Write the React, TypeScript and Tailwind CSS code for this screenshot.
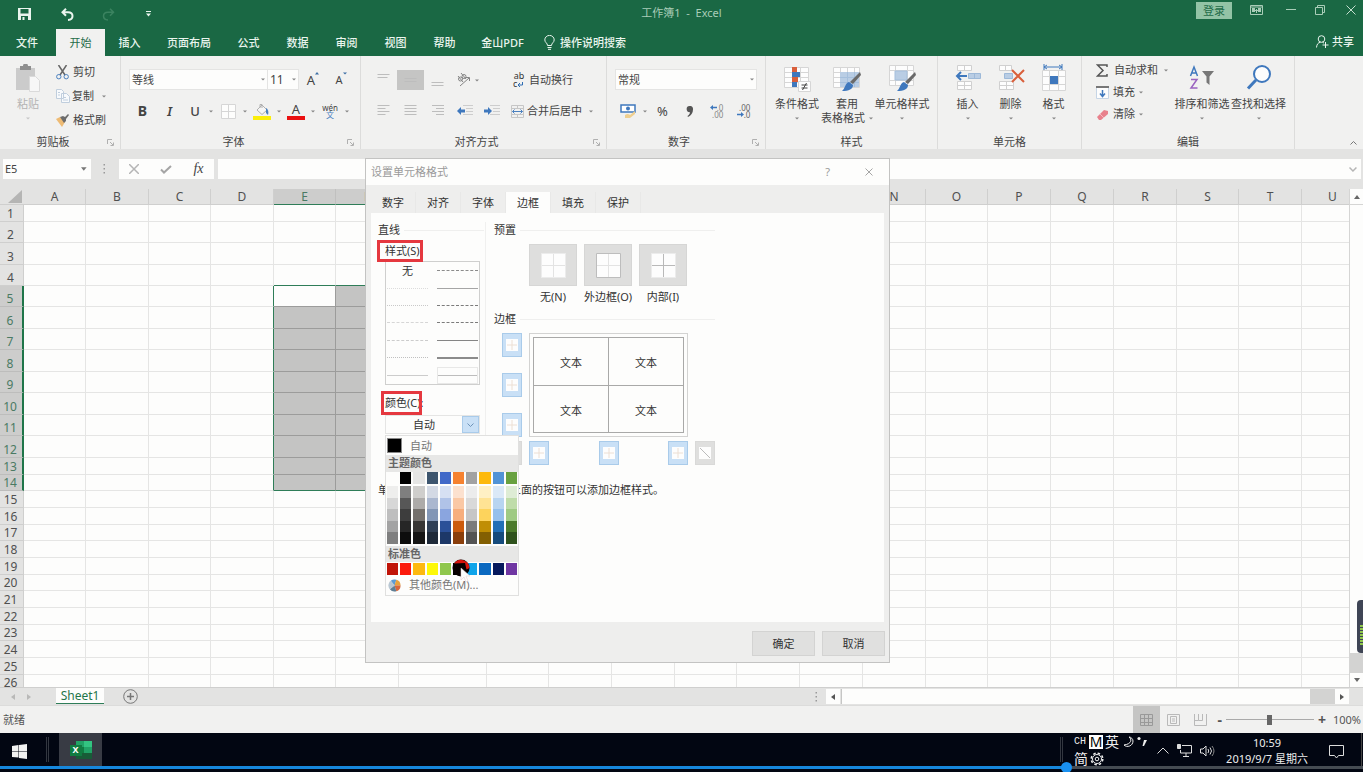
import type { ReactNode } from "react";
import clsx from "clsx";

const FONT = "font-['Noto_Sans','Noto_Sans_CJK_SC',sans-serif]";

/* ---------- small shared pieces ---------- */

function Caret({ className = "text-[#858585]" }: { className?: string }) {
  return (
    <svg width="4" height="3" viewBox="0 0 4 3" className={clsx("shrink-0", className)}>
      <path d="M0 0.5h4L2 2.5z" fill="currentColor" />
    </svg>
  );
}

function Launcher() {
  return (
    <svg width="7" height="7" viewBox="0 0 7 7" fill="none" stroke="#b0b0b0">
      <path d="M.5 5V.5H5M3 3l3 3M6.500 3.500v3h-3" />
    </svg>
  );
}

function Slot({ w, label, active, children }: { w: string; label: string; active?: boolean; children: ReactNode }) {
  return (
    <button aria-label={label} className={clsx("flex h-5 shrink-0 items-center justify-center", w, active && "bg-[#c5c5c4]")}>
      {children}
    </button>
  );
}

function Group({ title, w, inset, launcher, children }: { title: string; w: string; inset?: string; launcher?: boolean; children: ReactNode }) {
  return (
    <section className={clsx("flex shrink-0 flex-col border-r border-[#dcdcdb]", w)}>
      <div className={clsx("flex-1", inset)}>{children}</div>
      <div className={clsx("relative flex h-3.5 items-center justify-center", launcher && "pr-3.5")}>
        {title}
        {launcher && (
          <button aria-label={`${title}设置`} className="absolute top-1 right-1.5">
            <Launcher />
          </button>
        )}
      </div>
    </section>
  );
}

function BigButton({ icon, lines, w, muted }: { icon: ReactNode; lines: string[]; w: string; muted?: boolean }) {
  return (
    <button className={clsx("flex shrink-0 flex-col items-center pt-2 whitespace-nowrap", w, muted && "text-[#b3b3b3]")}>
      {icon}
      <span className="mt-[5px] leading-3.5">{lines[0]}</span>
      {lines[1] ? (
        <span className="flex items-center gap-1 leading-3.5">
          {lines[1]} <Caret />
        </span>
      ) : (
        <span className="mt-1.5">
          <Caret className={muted ? "text-[#c6c6c6]" : "text-[#858585]"} />
        </span>
      )}
    </button>
  );
}

function Lines({ widths, top = 0 }: { widths: number[]; top?: number }) {
  return (
    <svg width="14" height="14" viewBox="0 0 14 14" stroke="#bdbdbd">
      {widths.map((w, i) => {
        const x = w < 0 ? 13 + w : 0.5;
        return <path key={i} d={`M${x} ${top + i * 3 + 1.5}h${Math.abs(w)}`} />;
      })}
    </svg>
  );
}

function Indent({ right }: { right?: boolean }) {
  return (
    <svg width="16" height="14" viewBox="0 0 16 14" fill="none">
      <path d="M6 1.500h10M9 4.500h7M9 7.500h7M6 10.500h10" stroke="#cdcdcd" />
      <path d="M0 7l4-4v2.500h4v3H4V11z" fill="#3f78bd" transform={right ? "matrix(-1 0 0 1 8 0)" : undefined} />
    </svg>
  );
}

function Brush() {
  return (
    <>
      <path d="M28 8l1 3-8 9-3-2z" fill="#6a6a6a" />
      <path d="M17 18l4 3c0 4-4 6-11 6 3-2 3-8 7-9z" fill="#3f78bd" />
    </>
  );
}

/* ---------- title bar & tabs ---------- */

function TitleBar() {
  return (
    <header className="grid h-7 shrink-0 grid-cols-[1fr_auto_1fr] items-center text-[#a9cdb8]">
      <div className="flex items-center pl-[18px]">
        <button aria-label="保存" className="w-[43px]">
          <svg width="13" height="12" viewBox="0 0 13 12">
            <path d="M0 0h13v12H0z" fill="#eaf5ee" />
            <path d="M2.500 1h8v4.500h-8zM3 8h7v4H3z" fill="#1a6844" />
            <path d="M4.500 9h2v3h-2z" fill="#eaf5ee" />
          </svg>
        </button>
        <button aria-label="撤消" className="w-[41px]">
          <svg width="13" height="13" viewBox="0 0 13 13" fill="none" stroke="#eaf5ee" strokeWidth="2">
            <path d="M5 .7L1.500 4.200 5 7.700M1.500 4.200H7c6 0 6 7.500 0 7.800" />
          </svg>
        </button>
        <button aria-label="恢复" className="w-[44px]">
          <svg width="13" height="13" viewBox="0 0 13 13" fill="none" stroke="#3b8360" strokeWidth="1.500">
            <path d="M8 .7l3.500 3.500L8 7.700M11.500 4.200H6c-6 0-6 7.500 0 7.800" />
          </svg>
        </button>
        <button aria-label="自定义快速访问工具栏" className="text-[#eaf5ee]">
          <svg width="5" height="6" viewBox="0 0 5 6" fill="currentColor">
            <path d="M0 0h5v1H0zM0 2.500h5L2.500 5.500z" />
          </svg>
        </button>
      </div>
      <h1 className="pb-0.5 text-[11px] whitespace-pre">工作簿1  -  Excel</h1>
      <div className="flex h-full items-start justify-end">
        <button className="mt-0.5 mr-[18px] h-[17px] w-9 bg-[#93c3a6] text-[#1f6b48]">登录</button>
        <button aria-label="功能区显示选项" className="mt-[5px] w-9">
          <svg width="13" height="10" viewBox="0 0 13 10" fill="none" stroke="#a9cdb8">
            <path d="M.5.5h12v9H.5zM.5 2h12M6.500 8V4M4 5.500h2M7 5.500h2" />
            <path d="M2 3h3v4H2zM8 3h3v4H8z" fill="#a9cdb8" stroke="none" />
          </svg>
        </button>
        <button aria-label="最小化" className="mt-[9px] w-[29px]">
          <svg width="10" height="2" viewBox="0 0 10 2">
            <path d="M0 .5h10" stroke="#a9cdb8" />
          </svg>
        </button>
        <button aria-label="向下还原" className="mt-[5px] w-[31px]">
          <svg width="10" height="10" viewBox="0 0 10 10" fill="none" stroke="#a9cdb8">
            <path d="M.5 2.500h7v7h-7zM2.500 2V.5h7v7H8" />
          </svg>
        </button>
        <button aria-label="关闭" className="mt-[5px] mr-[7px]">
          <svg width="10" height="10" viewBox="0 0 10 10" stroke="#c4dfcf">
            <path d="M.5.5l9 9M9.500.5l-9 9" />
          </svg>
        </button>
      </div>
    </header>
  );
}

const TABS = [
  { name: "文件", w: "w-14 pr-0.5" },
  { name: "开始", w: "w-[49px]", active: true },
  { name: "插入", w: "w-[49px]" },
  { name: "页面布局", w: "w-[70px]" },
  { name: "公式", w: "w-[49px]" },
  { name: "数据", w: "w-[49px]" },
  { name: "审阅", w: "w-[49px]" },
  { name: "视图", w: "w-[49px]" },
  { name: "帮助", w: "w-[49px]" },
  { name: "金山PDF", w: "w-[67px]" },
];

function RibbonTabs() {
  return (
    <nav className="flex h-7 shrink-0 items-end text-[#eaf5ee]">
      {TABS.map((t) => (
        <button
          key={t.name}
          className={clsx("h-[27px] shrink-0", t.w, t.active ? "bg-[#f1f1f0] text-[#1f6b48]" : "font-medium")}
        >
          {t.name}
        </button>
      ))}
      <button className="ml-2 flex h-[27px] items-center gap-[5px] font-medium">
        <svg width="11" height="15" viewBox="0 0 11 15" fill="none" stroke="#eaf5ee">
          <path d="M3.500 10.500C3.500 8 .8 7.500.8 4.900a4.700 4.500 0 019.400 0c0 2.600-2.700 3.100-2.700 5.600zM3.500 12.500h4M4 14.300h3" />
        </svg>
        操作说明搜索
      </button>
      <button className="mr-[9px] ml-auto flex h-[29px] items-center gap-[3px] font-medium">
        <svg width="13" height="13" viewBox="0 0 13 13" fill="none" stroke="#eaf5ee">
          <circle cx="5.500" cy="4" r="3.300" />
          <path d="M.5 12.500c.3-3 1.500-5 4-5.200M6.500 7.300l1.500.8M9.500 7v6M6.500 10h6" />
        </svg>
        共享
      </button>
    </nav>
  );
}

/* ---------- ribbon ---------- */

function Ribbon() {
  return (
    <div className="flex h-[93px] shrink-0 overflow-hidden bg-[#f1f1f0] text-[#444]">
      <Group title="剪贴板" w="w-[121px]" launcher>
        <div className="flex">
          <BigButton
            w="w-14"
            muted
            lines={["粘贴"]}
            icon={
              <svg width="28" height="28" viewBox="0 0 28 28">
                <path d="M2 4h19v22H2z" fill="#cbcbcb" />
                <path d="M6 2h3a2.500 2.500 0 015 0h3v4H6z" fill="#8f8f8f" />
                <path d="M15.500 12.500h6l4 4v11h-10z" fill="#f7f7f7" stroke="#dadada" />
              </svg>
            }
          />
          <div className="flex flex-col gap-1 pt-1.5">
            <button className="flex h-5 items-center gap-1">
              <svg width="13" height="15" viewBox="0 0 13 15" fill="none">
                <path d="M2.500 0l6.500 10M10.500 0L4 10" stroke="#666" strokeWidth="1.500" />
                <circle cx="2.800" cy="11.700" r="2.200" stroke="#4a80bf" />
                <circle cx="10.200" cy="11.700" r="2.200" stroke="#4a80bf" />
              </svg>
              剪切
            </button>
            <button className="flex h-5 items-center gap-0.5">
              <svg width="14" height="14" viewBox="0 0 14 14" fill="#f8fafc" stroke="#c0cedd">
                <path d="M.5.5h5l2 2v7h-7zM5.500 4.500h5l3 3v6h-8zM7 8.500h3M7 11h5M2 3.500h2M2 6h2" />
              </svg>
              复制
              <span className="ml-1.5">
                <Caret />
              </span>
            </button>
            <button className="flex h-5 items-center gap-1">
              <svg width="13" height="13" viewBox="0 0 13 13">
                <path d="M0 5l4-2 5 5-3 5z" fill="#eebb74" />
                <path d="M4 3l3-1 2 1 3-3 1 1-3 4v2L8 9z" fill="#6c6c6c" />
              </svg>
              格式刷
            </button>
          </div>
        </div>
      </Group>

      <Group title="字体" w="w-[240px]" inset="pl-2" launcher>
        <div className="flex items-center pt-[13px]">
          <button aria-label="字体" className="flex h-[21px] w-[139px] items-center justify-between border border-[#e4e4e3] bg-[#fdfdfc] px-0.5">
            等线 <Caret />
          </button>
          <button aria-label="字号" className="flex h-[21px] w-[31px] items-center justify-between border border-l-0 border-[#e4e4e3] bg-[#fdfdfc] px-0.5 text-xs">
            11 <Caret />
          </button>
          <Slot w="w-7" label="增大字号">
            <span className="text-[13px]">A</span>
            <svg width="4" height="3" viewBox="0 0 4 3" className="mb-3"><path d="M0 2.500h4L2 0z" fill="#3c6ea5" /></svg>
          </Slot>
          <Slot w="w-7" label="减小字号">
            <span className="text-[11px]">A</span>
            <Caret className="mb-3 text-[#3c6ea5]" />
          </Slot>
        </div>
        <div className="flex items-center pt-[11px]">
          <Slot w="w-[27px]" label="加粗"><b className="text-sm">B</b></Slot>
          <Slot w="w-[27px]" label="倾斜"><i className="text-[13px] font-semibold">I</i></Slot>
          <Slot w="w-[24px]" label="下划线"><span className="text-[13px] font-medium">U</span></Slot>
          <Slot w="w-2" label="下划线选项"><Caret /></Slot>
          <Slot w="w-[26px]" label="边框">
            <svg width="15" height="15" viewBox="0 0 15 15" fill="#fdfdfc" stroke="#d6d6d6">
              <path d="M.5.5h14v14H.5zM7.500.5v14M.5 7.500h14" />
            </svg>
          </Slot>
          <Slot w="w-2" label="边框选项"><Caret /></Slot>
          <Slot w="w-[26px]" label="填充颜色">
            <svg width="18" height="17" viewBox="0 0 18 17">
              <path d="M4 7l5-5 5 5-5 4.500z" fill="#f6f6f6" stroke="#b0b0b0" />
              <path d="M7 5V1.500h2V5" fill="none" stroke="#b0b0b0" />
              <path d="M13 5c2 1 3 4 2 7l-2-2z" fill="#4a80bf" />
              <path d="M0 13h18v4H0z" fill="#fbee0b" />
            </svg>
          </Slot>
          <Slot w="w-2" label="填充颜色选项"><Caret /></Slot>
          <Slot w="w-[26px]" label="字体颜色">
            <span className="flex w-[18px] flex-col items-center">
              <span className="text-[13px] leading-[13px]">A</span>
              <span className="h-1 w-full bg-[#ea1010]" />
            </span>
          </Slot>
          <Slot w="w-2" label="字体颜色选项"><Caret /></Slot>
          <Slot w="w-[26px]" label="拼音">
            <span className="flex flex-col items-center text-[8px] leading-[7px]">
              <span>wén</span>
              <span className="text-[#4a80bf]">文</span>
            </span>
          </Slot>
          <Slot w="w-2" label="拼音选项"><Caret /></Slot>
        </div>
      </Group>

      <Group title="对齐方式" w="w-[246px]" inset="pl-[9px]" launcher>
        <div className="flex items-center pt-3.5">
          <Slot w="w-[27px]" label="顶端对齐"><Lines widths={[12, 10]} /></Slot>
          <Slot w="w-[27px]" label="垂直居中" active><Lines widths={[12, 12]} top={4} /></Slot>
          <Slot w="w-[27px]" label="底端对齐"><Lines widths={[12, 12]} top={8} /></Slot>
          <Slot w="w-[34px]" label="方向">
            <svg width="14" height="14" viewBox="0 0 14 14" fill="none" stroke="#858585">
              <circle cx="3.500" cy="6" r="2" />
              <circle cx="7" cy="3.500" r="2" />
              <path d="M1 3l5 6M4 0l5 6M3 13l9-8M9 4.500h3.500V8" />
            </svg>
            <span className="ml-1"><Caret /></span>
          </Slot>
          <button className="ml-7 flex h-5 items-center gap-1">
            <span className="flex w-3 flex-col text-[9px] leading-[8px] text-[#333]">
              <span>ab</span>
              <span className="flex items-center">
                c
                <svg width="6" height="5" viewBox="0 0 6 5" fill="none" stroke="#2f6db3">
                  <path d="M5.500 0v3H1M3 1L1 3l2 2" />
                </svg>
              </span>
            </span>
            自动换行
          </button>
        </div>
        <div className="flex items-center pt-[11px]">
          <Slot w="w-[27px]" label="左对齐"><Lines widths={[12, 8, 12, 8]} /></Slot>
          <Slot w="w-[27px]" label="居中"><Lines widths={[12, 12, 12, 12]} /></Slot>
          <Slot w="w-[27px]" label="右对齐"><Lines widths={[-12, -8, -12, -8]} /></Slot>
          <Slot w="w-[27px]" label="减少缩进"><Indent /></Slot>
          <Slot w="w-[27px]" label="增加缩进"><Indent right /></Slot>
          <button className="ml-1.5 flex h-5 items-center gap-[3px]">
            <svg width="13" height="13" viewBox="0 0 13 13" fill="none" stroke="#c6c6c6">
              <path d="M.5.5h12v12H.5zM6.500.5v3M6.500 9.500v3M.5 3.500h12M.5 9.500h12" />
              <path d="M1.500 6.500h10M3.500 4.500l-2 2 2 2M9.500 4.500l2 2-2 2" stroke="#4a80bf" />
            </svg>
            合并后居中
            <span className="ml-1"><Caret /></span>
          </button>
        </div>
      </Group>

      <Group title="数字" w="w-[159px]" inset="pl-2" launcher>
        <div className="pt-[13px]">
          <button aria-label="数字格式" className="flex h-[21px] w-[142px] items-center justify-between border border-[#e4e4e3] bg-[#fdfdfc] px-0.5">
            常规 <Caret />
          </button>
        </div>
        <div className="flex items-center pt-[11px]">
          <Slot w="w-[26px]" label="会计数字格式">
            <svg width="16" height="14" viewBox="0 0 16 14">
              <path d="M1 1h14v7H1z" fill="#fff" stroke="#3f78bd" strokeWidth="1.500" />
              <circle cx="8" cy="4.500" r="2" fill="#3f78bd" />
              <path d="M5 11c3-2 5 0 5 0l5-4v3l-5 4H5z" fill="#efcf8f" />
            </svg>
          </Slot>
          <Slot w="w-2" label="会计数字格式选项"><Caret /></Slot>
          <Slot w="w-[27px]" label="百分比样式"><span className="text-[13px]">%</span></Slot>
          <Slot w="w-[27px]" label="千位分隔样式">
            <svg width="8" height="11" viewBox="0 0 8 11">
              <path d="M3.500 0a3 3 0 013.500 3.500C7 7 5 9.500 2 11L1.500 10C3 9 4 7.500 4 6.200A3 3 0 013.500 0z" fill="#555" />
            </svg>
          </Slot>
          <Slot w="w-[27px]" label="增加小数位数">
            <span className="flex flex-col items-end text-[8px] leading-[7px] text-[#888]">
              <span className="flex items-center">
                <svg width="7" height="5" viewBox="0 0 7 5"><path d="M0 2.500L3 0v1.700h4v1.600H3V5z" fill="#3f78bd" /></svg>.0
              </span>
              <span>.00</span>
            </span>
          </Slot>
          <Slot w="w-[27px]" label="减少小数位数">
            <span className="flex flex-col items-end text-[8px] leading-[7px] text-[#666]">
              <span>.00</span>
              <span className="flex items-center">
                <svg width="7" height="5" viewBox="0 0 7 5"><path d="M7 2.500L4 0v1.700H0v1.600h4V5z" fill="#3f78bd" /></svg>.0
              </span>
            </span>
          </Slot>
        </div>
      </Group>

      <Group title="样式" w="w-[172px]" inset="pl-[6px]">
        <div className="flex">
          <BigButton
            w="w-[50px]"
            lines={["条件格式"]}
            icon={
              <svg width="28" height="28" viewBox="0 0 28 28">
                <path d="M1.500 3.500h24v20h-24zM1.500 8.500h24M1.500 13.500h24M1.500 18.500h24M9.500 3.500v20M17.500 3.500v20" fill="#fdfdfd" stroke="#d6d6d6" />
                <path d="M9 3h5v5H9zM9 13h6v5H9z" fill="#d95f3b" />
                <path d="M9 8h8v5H9zM9 18h5v5H9z" fill="#3f78bd" />
                <path d="M15.500 17.500h12v10h-12z" fill="#fdfdfd" stroke="#d6d6d6" />
                <path d="M18.500 21h6M18.500 24h6M23.500 19l-4 7" stroke="#444" />
              </svg>
            }
          />
          <BigButton
            w="w-[50px]"
            lines={["套用", "表格格式"]}
            icon={
              <svg width="30" height="28" viewBox="0 0 30 28">
                <path d="M1.500 3.500h26v20h-26zM1.500 8.500h26M1.500 13.500h26M1.500 18.500h26M8.500 3.500v20M15.500 3.500v20M22.500 3.500v20" fill="#fdfdfd" stroke="#d6d6d6" />
                <path d="M8 8h19v15H8z" fill="#b9cde4" />
                <path d="M8 13.500h19M8 18.500h19M15.500 8v15M22.500 8v15" stroke="#a5bfdc" />
                <Brush />
              </svg>
            }
          />
          <BigButton
            w="w-[60px]"
            lines={["单元格样式"]}
            icon={
              <svg width="30" height="28" viewBox="0 0 30 28">
                <path d="M2.500 1.500h24v20h-24zM2.500 6.500h24M2.500 16.500h24M8.500 1.500v20M20.500 1.500v20" fill="#fdfdfd" stroke="#d6d6d6" />
                <path d="M8 7h12v9H8z" fill="#b9cde4" stroke="#a5bfdc" />
                <Brush />
              </svg>
            }
          />
        </div>
      </Group>

      <Group title="单元格" w="w-[144px]" inset="pl-2">
        <div className="flex">
          <BigButton
            w="w-[43px]"
            lines={["插入"]}
            icon={
              <svg width="28" height="28" viewBox="0 0 28 28">
                <path d="M3.500 1.500h14v5h-14zM10.500 1.500v5M3.500 17.500h14v8h-14zM10.500 17.500v8M3.500 21.500h14" fill="#fdfdfd" stroke="#d0d0d0" />
                <path d="M14.500 9.500h12v5h-12zM20.500 9.500v5" fill="#b9cde4" stroke="#9db9d8" />
                <path d="M13 12H3M7 8l-4 4 4 4" fill="none" stroke="#3f78bd" strokeWidth="2" />
              </svg>
            }
          />
          <BigButton
            w="w-[43px]"
            lines={["删除"]}
            icon={
              <svg width="28" height="28" viewBox="0 0 28 28">
                <path d="M2.500 1.500h12v5h-12zM8.500 1.500v5M2.500 17.500h14v8h-14zM9.500 17.500v8M2.500 21.500h14" fill="#fdfdfd" stroke="#d0d0d0" />
                <path d="M7.500 9.500h8v5h-8z" fill="#b9cde4" stroke="#9db9d8" />
                <path d="M15 6l12 12M27 6L15 18" stroke="#d95f3b" strokeWidth="2" />
              </svg>
            }
          />
          <BigButton
            w="w-[43px]"
            lines={["格式"]}
            icon={
              <svg width="28" height="28" viewBox="0 0 28 28">
                <path d="M2.500 6.500h23v20h-23zM2.500 12.500h23M2.500 20.500h23M9.500 6.500v20M18.500 6.500v20" fill="#fdfdfd" stroke="#d6d6d6" />
                <path d="M10 12h8v8h-8z" fill="#3f78bd" />
                <path d="M4 3h18M4 0v6M22 0v6M7 1L4 3l3 2M19 1l3 2-3 2" fill="none" stroke="#3f78bd" />
              </svg>
            }
          />
        </div>
      </Group>

      <Group title="编辑" w="w-[213px]" inset="pl-3.5">
        <div className="flex">
          <div className="flex w-[78px] flex-col gap-0.5 pt-1 whitespace-nowrap">
            <button className="flex h-5 items-center gap-1.5">
              <svg width="12" height="13" viewBox="0 0 12 13" fill="none" stroke="#555" strokeWidth="1.500">
                <path d="M11 3V1H1.500L7 6.500 1.500 12H11v-2" />
              </svg>
              自动求和
              <Caret />
            </button>
            <button className="flex h-5 items-center gap-1">
              <svg width="13" height="13" viewBox="0 0 13 13" fill="#fdfdfd">
                <path d="M.5.5h12v12H.5z" stroke="#c6d5e6" />
                <path d="M0 1h13" stroke="#777" strokeWidth="2" />
                <path d="M6.500 4v6M4 7.500l2.500 3 2.500-3" fill="none" stroke="#3f78bd" strokeWidth="1.500" />
              </svg>
              填充 <Caret />
            </button>
            <button className="flex h-5 items-center gap-1">
              <svg width="13" height="13" viewBox="0 0 13 13">
                <path d="M1 9l7-7 4 1v3l-7 6H3z" fill="#e8818c" />
                <path d="M4 6l4 4" stroke="#f5b9bf" />
              </svg>
              清除 <Caret />
            </button>
          </div>
          <BigButton
            w="w-[56px]"
            lines={["排序和筛选"]}
            icon={
              <svg width="26" height="28" viewBox="0 0 26 28" fill="none">
                <path d="M1.500 12L5 3l3.500 9M2.500 9h5" stroke="#3f78bd" strokeWidth="1.500" />
                <path d="M2 15.500h6L2 24h6.500" stroke="#9a63c0" strokeWidth="1.500" />
                <path d="M13 7h12l-4.500 5.500V21l-3-2.500v-6z" fill="#777" />
              </svg>
            }
          />
          <BigButton
            w="w-[57px]"
            lines={["查找和选择"]}
            icon={
              <svg width="28" height="28" viewBox="0 0 28 28" fill="none" stroke="#3f78bd">
                <circle cx="17" cy="10" r="8" strokeWidth="2" fill="#fdfdfd" />
                <path d="M11 16l-8 8.500" strokeWidth="3" />
              </svg>
            }
          />
        </div>
      </Group>
      <button aria-label="折叠功能区" className="mr-1.5 mb-1 ml-auto self-end">
        <svg width="7" height="5" viewBox="0 0 7 5" fill="none" stroke="#777">
          <path d="M.5 4.500l3-3 3 3" />
        </svg>
      </button>
    </div>
  );
}

/* ---------- formula bar ---------- */

function FormulaBar() {
  return (
    <div className="flex h-10 shrink-0 items-center bg-[#e3e3e2] px-0.5 text-[#444]">
      <div className="ml-px flex h-5 w-[88px] items-center bg-[#fdfdfc] pr-1 pl-0.5">
        <input aria-label="名称框" defaultValue="E5" className="w-full min-w-0 bg-transparent outline-none" />
        <svg width="6" height="4" viewBox="0 0 6 4"><path d="M0 0h6L3 4z" fill="#777" /></svg>
      </div>
      <svg width="3" height="11" viewBox="0 0 3 11" className="mx-3" fill="#999">
        <path d="M.5 0h1.500v1.500H.5zM.5 4h1.500v1.500H.5zM.5 8h1.500v1.500H.5z" />
      </svg>
      <div className="ml-px flex h-5 w-[95px] items-center justify-around bg-[#fdfdfc]">
        <button aria-label="取消">
          <svg width="10" height="10" viewBox="0 0 10 10" stroke="#b5b5b5" strokeWidth="1.500"><path d="M0 0l10 10M10 0L0 10" /></svg>
        </button>
        <button aria-label="输入">
          <svg width="12" height="9" viewBox="0 0 12 9" fill="none" stroke="#a5a5a5" strokeWidth="2"><path d="M1 4.500L4 7.500 11 1" /></svg>
        </button>
        <button aria-label="插入函数" className="font-['Liberation_Serif',serif] text-sm leading-none italic">fx</button>
      </div>
      <div className="ml-1 flex h-5 flex-1 items-center bg-[#fdfdfc] pr-1">
        <input aria-label="编辑栏" className="w-full bg-transparent px-1 outline-none" />
        <svg width="8" height="5" viewBox="0 0 8 5" fill="none" stroke="#b5b5b5" strokeWidth="1.500"><path d="M.5.5L4 4 7.500.5" /></svg>
      </div>
    </div>
  );
}

/* ---------- sheet ---------- */

const COLS: [string, string][] = [
  ["A", "w-[62px]"], ["B", "w-[63px]"], ["C", "w-[62px]"], ["D", "w-[63px]"], ["E", "w-[62px]"],
  ["F", "w-[63px]"], ["G", "w-[88px]"], ["H", "w-[62px]"], ["I", "w-[63px]"], ["J", "w-[63px]"],
  ["K", "w-[62px]"], ["L", "w-[63px]"], ["M", "w-[63px]"], ["N", "w-[63px]"], ["O", "w-[62px]"],
  ["P", "w-[63px]"], ["Q", "w-[63px]"], ["R", "w-[63px]"], ["S", "w-[62px]"], ["T", "w-[63px]"],
  ["U", "w-[62px]"],
];
const ROWS = [
  "h-[17px]", "h-[21px]", "h-[22px]", "h-[21px]", "h-[21px]", "h-[22px]", "h-[21px]", "h-[22px]", "h-[21px]",
  "h-[22px]", "h-[21px]", "h-[22px]", "h-[17px]", "h-[16px]", "h-[17px]", "h-[17px]", "h-[16px]", "h-[17px]",
  "h-[17px]", "h-[16px]", "h-[17px]", "h-[17px]", "h-[16px]", "h-[17px]", "h-[17px]", "h-[16px]",
];
const SEL = { c0: 4, c1: 7, r0: 5, r1: 14 };

function cellClass(r: number, c: number) {
  const inC = c >= SEL.c0 && c <= SEL.c1;
  const inR = r >= SEL.r0 && r <= SEL.r1;
  const on = inC && inR;
  const active = r === SEL.r0 && c === SEL.c0;
  return clsx(
    "border-r border-b",
    on && !active && "bg-[#c4c4c3]",
    inR && (c === SEL.c0 - 1 || c === SEL.c1) ? "border-r-[#2f7d58]" : on ? "border-r-[#9c9c9b]" : "border-r-[#e5e5e4]",
    inC && (r === SEL.r0 - 1 || r === SEL.r1) ? "border-b-[#2f7d58]" : on ? "border-b-[#9c9c9b]" : "border-b-[#e5e5e4]",
  );
}

function Sheet() {
  return (
    <div className="flex min-h-0 flex-1 bg-[#fdfdfc]">
      <div className="min-w-0 flex-1 overflow-hidden">
        <table className="w-max table-fixed border-separate border-spacing-0 text-xs leading-3.5 text-[#505050]">
          <thead>
            <tr className="h-4 bg-[#e3e3e2]">
              <th className="w-6 border-b border-[#cfcfce] p-0">
                <svg width="14" height="13" viewBox="0 0 14 13" className="ml-2"><path d="M14 0v13H0z" fill="#b5b5b4" /></svg>
              </th>
              {COLS.map(([name, w], c) => (
                <th
                  key={name}
                  className={clsx(
                    "h-4 overflow-hidden border-r border-b p-0 font-normal",
                    w,
                    c >= SEL.c0 && c <= SEL.c1
                      ? "border-r-[#c0c0bf] border-b-[#2f7d58] bg-[#cdcdcc] text-[#4a7a63]"
                      : "border-r-[#cfcfce] border-b-[#cfcfce]",
                  )}
                >
                  {name}
                </th>
              ))}
            </tr>
          </thead>
          <tbody>
            {ROWS.map((h, i) => {
              const r = i + 1;
              const sel = r >= SEL.r0 && r <= SEL.r1;
              return (
                <tr key={r} className={h}>
                  <th
                    className={clsx(
                      "border-b p-0 pr-0.5 align-bottom font-normal",
                      sel
                        ? "border-r-2 border-r-[#1f7549] border-b-[#bdbdbc] bg-[#cdcdcc] text-[#4a7a63]"
                        : "border-r border-r-[#cfcfce] border-b-[#cfcfce] bg-[#e3e3e2]",
                    )}
                  >
                    {r}
                  </th>
                  {COLS.map(([name], c) => (
                    <td key={name} className={clsx("p-0", cellClass(r, c))} />
                  ))}
                </tr>
              );
            })}
          </tbody>
        </table>
      </div>
      <div className="flex w-3.5 shrink-0 flex-col border-l border-[#d5d5d4] bg-[#fdfdfc]">
        <button aria-label="向上滚动" className="flex h-4 items-center justify-center border-b border-[#d5d5d4]">
          <svg width="6" height="4" viewBox="0 0 6 4"><path d="M0 4h6L3 0z" fill="#666" /></svg>
        </button>
        <div className="flex-1" />
        <div className="h-5 bg-[#d3d3d2]" />
        <button aria-label="向下滚动" className="flex h-3.5 items-center justify-center">
          <svg width="6" height="4" viewBox="0 0 6 4"><path d="M0 0h6L3 4z" fill="#666" /></svg>
        </button>
      </div>
    </div>
  );
}

function SheetTabs() {
  return (
    <div className="flex h-[18px] shrink-0 border-t border-[#cfcfce] bg-[#e3e3e2] pr-3.5">
      <div className="flex w-14 items-center gap-3 pl-[11px] text-[#b9b9b8]">
        <svg width="4" height="6" viewBox="0 0 4 6"><path d="M4 0v6L0 3z" fill="currentColor" /></svg>
        <svg width="4" height="6" viewBox="0 0 4 6"><path d="M0 0v6l4-3z" fill="currentColor" /></svg>
      </div>
      <button className="h-4 w-12 border-b border-[#2f7d58] bg-[#fdfdfc] text-xs leading-3.5 text-[#1f7549]">Sheet1</button>
      <button aria-label="新工作表" className="ml-[19px]">
        <svg width="15" height="15" viewBox="0 0 15 15" fill="none" stroke="#777">
          <circle cx="7.500" cy="7.500" r="6.800" />
          <path d="M7.500 4v7M4 7.500h7" strokeWidth="1.500" />
        </svg>
      </button>
      <div className="ml-auto flex w-[534px]">
        <svg width="3" height="11" viewBox="0 0 3 11" className="mt-1 mr-[8px]" fill="#999">
          <path d="M.5 0h1.500v1.500H.5zM.5 4h1.500v1.500H.5zM.5 8h1.500v1.500H.5z" />
        </svg>
        <button aria-label="向左滚动" className="my-px flex w-3.5 items-center justify-center bg-[#fdfdfc]">
          <svg width="4" height="6" viewBox="0 0 4 6"><path d="M4 0v6L0 3z" fill="#555" /></svg>
        </button>
        <div className="my-px ml-px flex flex-1 justify-end border-l border-[#c6c6c5] bg-[#fdfdfc]">
          <div className="w-[25px] bg-[#d3d3d2]" />
        </div>
        <button aria-label="向右滚动" className="my-px flex w-3.5 items-center justify-center bg-[#fdfdfc]">
          <svg width="4" height="6" viewBox="0 0 4 6"><path d="M0 0v6l4-3z" fill="#555" /></svg>
        </button>
      </div>
    </div>
  );
}

function StatusBar() {
  return (
    <footer className="flex h-7 shrink-0 items-center border-t border-[#dcdcdb] bg-[#f1f1f0] pr-0.5 pl-[3px] text-[#555]">
      就绪
      <div className="ml-auto flex h-full items-center">
        <button aria-label="普通" className="flex h-full w-[27px] items-center justify-center bg-[#c5c5c4]">
          <svg width="13" height="12" viewBox="0 0 13 12" fill="none" stroke="#999"><path d="M.5.5h12v11H.5zM4.500.5v11M8.500.5v11M.5 4.500h12M.5 8.500h12" /></svg>
        </button>
        <button aria-label="页面布局" className="flex w-[27px] justify-center">
          <svg width="13" height="12" viewBox="0 0 13 12" fill="none" stroke="#b9b9b9"><path d="M.5.5h12v11H.5zM3.500 2.500h6v7h-6zM5 5h3M5 7h3" /></svg>
        </button>
        <button aria-label="分页预览" className="flex w-[27px] justify-center">
          <svg width="13" height="12" viewBox="0 0 13 12" fill="none" stroke="#b9b9b9"><path d="M.5 0v11.500h12V0M.5 6.500h4V0M4.500 6.500h4V0" /></svg>
        </button>
        <button aria-label="缩小" className="ml-[3px] text-sm leading-none font-bold">-</button>
        <input
          aria-label="显示比例"
          type="range"
          className="mx-1 h-3 w-[88px] appearance-none bg-[linear-gradient(#a9a9a9,#a9a9a9)] bg-[length:100%_1px] bg-center bg-no-repeat [&::-webkit-slider-thumb]:h-2.5 [&::-webkit-slider-thumb]:w-[5px] [&::-webkit-slider-thumb]:appearance-none [&::-webkit-slider-thumb]:bg-[#666]"
        />
        <button aria-label="放大" className="text-sm leading-none font-bold">+</button>
        <span className="ml-[7px]">100%</span>
      </div>
    </footer>
  );
}

/* ---------- taskbar ---------- */

function Taskbar() {
  return (
    <div className="relative flex h-[39px] shrink-0 bg-[#020612] pb-1.5 text-[#eee]">
      <button aria-label="开始菜单" className="flex w-[46px] items-center pt-1 pl-3">
        <svg width="15" height="15" viewBox="0 0 15 15" fill="#f2f2f2">
          <path d="M0 2l6.500-.9v6H0zM7 1L15 0v7H7zM0 7.500h6.500v6L0 13zM7 7.500h8v7.500l-8-1z" />
        </svg>
      </button>
      <div className="my-1 w-[3px] border-x border-[#333740]" />
      <button aria-label="Excel" className="ml-2.5 flex w-[43px] items-center justify-center bg-[#383b44]">
        <span className="relative flex h-[18px] w-[22px] items-center pl-px">
          <svg width="22" height="18" viewBox="0 0 22 18" className="absolute inset-0">
            <path d="M6 0h8v6H6z" fill="#21a366" />
            <path d="M14 0h8v6h-8z" fill="#33c481" />
            <path d="M6 6h8v6H6z" fill="#107c41" />
            <path d="M14 6h8v6h-8z" fill="#21a366" />
            <path d="M6 12h16v6H6z" fill="#185c37" />
            <path d="M0 4h12v11H0z" fill="#107c41" />
          </svg>
          <span className="relative w-2.5 text-center text-[9px] leading-none font-bold text-white">X</span>
        </span>
      </button>
      <div className="my-1 ml-auto w-[3px] border-x border-[#333740]" />
      <div className="ml-[11px] flex w-[75px] flex-col">
        <div className="flex h-[18px] items-center text-sm">
          <span className="w-[15px] font-['Liberation_Mono',monospace] text-[10px]">CH</span>
          <span className="flex h-3.5 w-3.5 items-center justify-center bg-white text-black">M</span>
          <span className="ml-0.5">英</span>
          <svg width="11" height="12" viewBox="0 0 11 12" className="ml-1 shrink-0" fill="none" stroke="#eee"><path d="M6 1c3 2 3 7-5 8 3 3 9 1 9-4 0-2-2-4-4-4z" /></svg>
          <svg width="12" height="12" viewBox="0 0 12 12" className="ml-0.5 shrink-0" fill="#eee"><circle cx="3" cy="2.500" r="1.600" /><path d="M8 4h3l-3 6H6.500z" /></svg>
        </div>
        <div className="flex h-[15px] items-center text-sm">
          简
          <svg width="14" height="14" viewBox="0 0 14 14" className="ml-0.5" fill="none" stroke="#eee">
            <circle cx="7" cy="7" r="5.800" strokeWidth="1.500" strokeDasharray="2.500 2.050" />
            <circle cx="7" cy="7" r="4.500" />
            <circle cx="7" cy="7" r="1.800" />
          </svg>
        </div>
      </div>
      <div className="flex items-center gap-2 pt-0.5 pl-2">
        <svg width="12" height="7" viewBox="0 0 12 7" fill="none" stroke="#ddd"><path d="M.5 6.500L6 1l5.500 5.500" /></svg>
        <svg width="15" height="13" viewBox="0 0 15 13" fill="none" stroke="#ddd"><path d="M5 1.500h9.500v7.500H3.500V6M9 9v3M6 12.500h6" /><path d="M.5.500h3v4h-3z" fill="#ddd" /></svg>
        <svg width="15" height="12" viewBox="0 0 15 12" fill="none" stroke="#ddd"><path d="M.5 4H3l3-3v10L3 8H.5zM8 4q1.500 2 0 4M10 2.500q3 3.500 0 7" /><path d="M12 1q4 5 0 10" stroke="#888" /></svg>
      </div>
      <div className="ml-2 flex w-[88px] flex-col items-center pt-0.5 leading-4 whitespace-nowrap">
        <span>10:59</span>
        <span>2019/9/7 星期六</span>
      </div>
      <button aria-label="通知" className="mr-[17px] ml-[18px] flex items-center pt-1">
        <svg width="15" height="15" viewBox="0 0 15 15" fill="none" stroke="#ddd"><path d="M.5 1.500h14v10h-5l-2 2.500-2-2.500h-5z" /></svg>
      </button>
      <div className="mr-px w-px bg-[#444]" />
      <input
        aria-label="播放进度"
        type="range"
        max={1000}
        defaultValue={785}
        className="absolute inset-x-0 bottom-[3px] h-[3px] w-full appearance-none bg-[linear-gradient(to_right,#1687dc_78.3%,#454b52_78.3%)] [&::-webkit-slider-thumb]:h-[11px] [&::-webkit-slider-thumb]:w-[11px] [&::-webkit-slider-thumb]:appearance-none [&::-webkit-slider-thumb]:rounded-full [&::-webkit-slider-thumb]:bg-[#1990f0]"
      />
    </div>
  );
}

/* ---------- format cells dialog ---------- */

const THEME = ["bg-[#fdfdfc]", "bg-black", "bg-[#e5e5e4]", "bg-[#3d556e]", "bg-[#4169c8]", "bg-[#f68230]", "bg-[#a2a2a2]", "bg-[#fdb90c]", "bg-[#5193d6]", "bg-[#68a140]"];
const SHADES = [
  "bg-[#eeeeed]", "bg-[#7f7f7f]", "bg-[#cfcecc]", "bg-[#d3d9e4]", "bg-[#d6e0f3]", "bg-[#fce1cf]", "bg-[#ececec]", "bg-[#fff0c4]", "bg-[#dbe9f7]", "bg-[#deecd5]",
  "bg-[#d7d7d7]", "bg-[#575757]", "bg-[#adaba9]", "bg-[#aab7cf]", "bg-[#b0c3e8]", "bg-[#fac8a5]", "bg-[#d9d9d9]", "bg-[#ffe394]", "bg-[#b8d5f1]", "bg-[#bfdca9]",
  "bg-[#bebebe]", "bg-[#3d3d3d]", "bg-[#74706c]", "bg-[#8296b5]", "bg-[#8aa5df]", "bg-[#f7ae7d]", "bg-[#c6c6c6]", "bg-[#fdd35c]", "bg-[#95c0ec]", "bg-[#9fca83]",
  "bg-[#a3a3a3]", "bg-[#262626]", "bg-[#383634]", "bg-[#2f3f55]", "bg-[#2b5098]", "bg-[#cc5b0d]", "bg-[#7b7b7b]", "bg-[#c08e04]", "bg-[#226fb6]", "bg-[#4c7b2b]",
  "bg-[#7f7f7f]", "bg-[#0d0d0d]", "bg-[#161514]", "bg-[#1e2938]", "bg-[#1d3868]", "bg-[#8a3e0b]", "bg-[#535353]", "bg-[#835f02]", "bg-[#164b7c]", "bg-[#2f521c]",
];
const STANDARD = ["bg-[#c01408]", "bg-[#fb1a0c]", "bg-[#fdb910]", "bg-[#fdf808]", "bg-[#8fc74c]", "bg-black", "bg-[#0fa4ea]", "bg-[#0b69c0]", "bg-[#06195c]", "bg-[#6f36a2]"];

const STYLE_LINES = [
  "", "border-t border-dashed border-[#8b8b8b]",
  "border-t border-dotted border-[#dcdcdc]", "border-t border-[#a5a5a5]",
  "border-t border-dotted border-[#c9c9c9]", "border-t border-dashed border-[#7b7b7b]",
  "border-t border-dashed border-[#d6d6d6]", "border-t border-dashed border-[#7b7b7b]",
  "border-t border-dashed border-[#cccccc]", "border-t border-[#858585]",
  "border-t border-dotted border-[#c0c0c0]", "border-t-2 border-[#8b8b8b]",
  "border-t border-[#cccccc]", "border-t border-[#bdbdbd]",
];

function Legend({ children }: { children: ReactNode }) {
  return (
    <div className="flex h-4 items-center gap-1">
      {children}
      <span className="h-px flex-1 bg-[#efefee]" />
    </div>
  );
}

function EdgeButton({ label, off }: { label: string; off?: boolean }) {
  return (
    <button
      aria-label={label}
      className={clsx("flex h-6 w-5 items-center justify-center border", off ? "border-[#d9d9d8] bg-[#dfdfde]" : "border-[#a9cbea] bg-[#c9e0f6]")}
    >
      <svg width="12" height="12" viewBox="0 0 12 12">
        <path d="M0 0h12v12H0z" fill="#fdfdfd" />
        {off ? <path d="M1 1l10 10" stroke="#bbb" /> : <path d="M6 1v10M1 6h10" stroke="#ecdfd4" />}
      </svg>
    </button>
  );
}

function Preset({ label, outer, inner }: { label: string; outer?: boolean; inner?: boolean }) {
  return (
    <button className="flex w-12 flex-col items-center whitespace-nowrap">
      <span className="flex h-[42px] w-12 items-center justify-center border border-[#d6d6d5] bg-[#dededd]">
        <svg width="25" height="25" viewBox="0 0 25 25" fill="none">
          <path d="M.5.5h24v24H.5z" fill="#fdfdfd" stroke={outer ? "#bdbdbd" : "#ececec"} />
          <path d="M12.500 1v23M1 12.500h23" stroke={inner ? "#b9b9b9" : "#e3e3e3"} />
        </svg>
      </span>
      <span className="leading-[21px]">{label}</span>
    </button>
  );
}

function ColorMenu() {
  return (
    <div className="absolute top-full -left-px z-10 mt-0.5 w-[134px] border border-[#e0e0df] bg-[#fdfdfc] text-[#777]">
      <button className="flex h-[19px] w-full items-center gap-2 pl-px">
        <span className="h-[15px] w-[15px] border border-[#888] bg-black" />
        自动
      </button>
      <div className="h-[17px] bg-[#e7e7e6] pl-0.5 leading-4 font-bold text-[#666]">主题颜色</div>
      <div className="grid h-3 grid-cols-10 gap-0.5 px-px">
        {THEME.map((c) => (
          <button key={c} aria-label="主题颜色" className={c} />
        ))}
      </div>
      <div className="mt-0.5 grid h-[58px] grid-cols-10 grid-rows-5 gap-x-0.5 px-px">
        {SHADES.map((c, i) => (
          <button key={i} aria-label="主题颜色变体" className={c} />
        ))}
      </div>
      <div className="mt-0.5 h-4 bg-[#e7e7e6] pl-0.5 leading-4 font-bold text-[#666]">标准色</div>
      <div className="relative mt-px grid h-3 grid-cols-10 gap-0.5 px-px">
        {STANDARD.map((c) => (
          <button key={c} aria-label="标准色" className={c} />
        ))}
        <svg width="22" height="24" viewBox="0 0 22 24" className="pointer-events-none absolute -top-1 left-[66px]">
          <circle cx="9" cy="9" r="8.500" fill="#080000" />
          <path d="M2 4.500A8.500 8.500 0 0117.500 9l-3 1.500L13 4z" fill="#d8140c" />
          <path d="M9 9v12l3-3 2 5 2-1-2-5h4z" fill="#fdfdfd" stroke="#e3c9c9" strokeWidth=".5" />
        </svg>
      </div>
      <button className="flex h-5 w-full items-center gap-2 pl-0.5">
        <svg width="13" height="13" viewBox="0 0 14 14">
          <circle cx="7" cy="7" r="6.500" fill="#e2e2e2" />
          <path d="M7 7L3 1.800A6.500 6.500 0 019 .8z" fill="#5b9bd5" />
          <path d="M7 7L9 .8A6.500 6.500 0 0113.500 7z" fill="#e9a13b" />
          <path d="M7 7h6.500A6.500 6.500 0 019 13.200z" fill="#d9663b" />
          <path d="M7 7l2 6.200A6.500 6.500 0 012 11z" fill="#5f7f95" />
          <path d="M7 7l-5 4A6.500 6.500 0 013 1.800z" fill="#b8c7d3" />
        </svg>
        其他颜色(M)...
      </button>
    </div>
  );
}

function FormatDialog() {
  return (
    <div role="dialog" aria-label="设置单元格格式" className="absolute top-[158px] left-[365px] z-20 w-[525px] border border-[#c3c3c2] bg-[#eeeeed] text-[#333]">
      <div className="flex h-[26px] items-center bg-[#fdfdfc] pr-4 pl-[5px] text-[#9a9a9a]">
        设置单元格格式
        <button aria-label="帮助" className="mr-[35px] ml-auto">?</button>
        <button aria-label="关闭">
          <svg width="8" height="8" viewBox="0 0 8 8" stroke="#a5a5a5"><path d="M.5.5l7 7M7.500.5l-7 7" /></svg>
        </button>
      </div>
      <div className="flex px-[5px] pt-[7px]">
        {["数字", "对齐", "字体", "边框", "填充", "保护"].map((t) => (
          <button key={t} className={clsx("h-[21px] w-[45px] border-r border-[#e8e8e7]", t === "边框" && "bg-[#fdfdfc]")}>
            {t}
          </button>
        ))}
      </div>
      <div className="mx-[5px] h-[409px] bg-[#fdfdfc] px-[7px] pt-[9px]">
        <div className="flex gap-2">
          <section className="w-[108px] border-r border-[#f0f0ef] pr-px">
            <Legend>直线</Legend>
            <div className="relative mt-0.5 flex h-[21px] items-center pl-[7px]">
              样式(S)
              <span className="absolute top-0 -left-px h-[22px] w-[46px] border-3 border-[#e5383f]" />
            </div>
            <div className="ml-[7px] grid h-[124px] w-[95px] grid-cols-2 grid-rows-7 gap-x-[9px] border border-[#cfcfce] px-px">
              {STYLE_LINES.map((s, i) => (
                <button
                  key={i}
                  aria-label={i ? `线条样式 ${i}` : undefined}
                  className={clsx("flex items-center justify-center", i === 13 && "border border-[#e8e8e7]")}
                >
                  {i === 0 ? "无" : <span className={clsx("w-full", s)} />}
                </button>
              ))}
            </div>
            <div className="relative mt-1.5 flex h-6 items-center pl-[7px]">
              颜色(C):
              <span className="absolute top-0 left-[3px] h-6 w-[41px] border-3 border-[#e5383f]" />
            </div>
            <div className="relative ml-[7px] flex h-[19px] w-[95px] border border-[#e5e5e4]">
              <button className="flex-1 leading-none">自动</button>
              <button aria-label="选择颜色" className="flex w-[17px] items-center justify-center border border-[#a9cbea] bg-[#c9e0f6]">
                <svg width="7" height="4" viewBox="0 0 7 4" fill="none" stroke="#6d93b8"><path d="M.5.5l3 3 3-3" /></svg>
              </button>
              <ColorMenu />
            </div>
          </section>
          <section className="w-[221px]">
            <Legend>预置</Legend>
            <div className="mt-1.5 ml-[35px] flex gap-[7px]">
              <Preset label="无(N)" />
              <Preset label="外边框(O)" outer />
              <Preset label="内部(I)" inner />
            </div>
            <div className="mt-1">
              <Legend>边框</Legend>
            </div>
            <div className="mt-1.5 ml-2 flex gap-[7px]">
              <div className="flex flex-col gap-4">
                <EdgeButton label="上边框" />
                <EdgeButton label="内部横线" />
                <EdgeButton label="下边框" />
              </div>
              <div className="h-[104px] w-[159px] border border-[#d3d3d2] p-[3px]">
                <div className="grid h-full grid-cols-2 grid-rows-2 border-t border-l border-[#a9a9a8]">
                  {[0, 1, 2, 3].map((i) => (
                    <span key={i} className="flex items-center justify-center border-r border-b border-[#a9a9a8] pt-1">
                      文本
                    </span>
                  ))}
                </div>
              </div>
            </div>
            <div className="mt-1 ml-2 flex">
              <EdgeButton label="斜上边框" off />
              <div className="mr-[7px] ml-[7px] flex w-[159px] justify-between">
                <EdgeButton label="左边框" />
                <EdgeButton label="内部竖线" />
                <EdgeButton label="右边框" />
              </div>
              <EdgeButton label="斜下边框" off />
            </div>
          </section>
        </div>
        <p className="mt-[17px] leading-4">单击预置选项、预览草图及上面的按钮可以添加边框样式。</p>
      </div>
      <div className="flex justify-end gap-[7px] px-1 pt-[9px] pb-1.5">
        <button className="h-[25px] w-[63px] border border-[#d3d3d2] bg-[#e0e0df]">确定</button>
        <button className="h-[25px] w-[63px] border border-[#d3d3d2] bg-[#e0e0df]">取消</button>
      </div>
    </div>
  );
}

export default function App() {
  return (
    <div className={clsx("relative flex h-screen flex-col overflow-hidden bg-[#1a6844] text-[11px] leading-4", FONT)}>
      <TitleBar />
      <RibbonTabs />
      <Ribbon />
      <FormulaBar />
      <Sheet />
      <SheetTabs />
      <StatusBar />
      <Taskbar />
      <FormatDialog />
      <div className="absolute top-[600px] right-0 z-20 flex h-[53px] w-1.5 items-center rounded-l bg-[#3f4555] pl-[3px]">
        <span className="mt-4 h-5 w-[3px] bg-[repeating-linear-gradient(#8fc74c_0_2px,#3f4555_2px_3px)]" />
      </div>
    </div>
  );
}
